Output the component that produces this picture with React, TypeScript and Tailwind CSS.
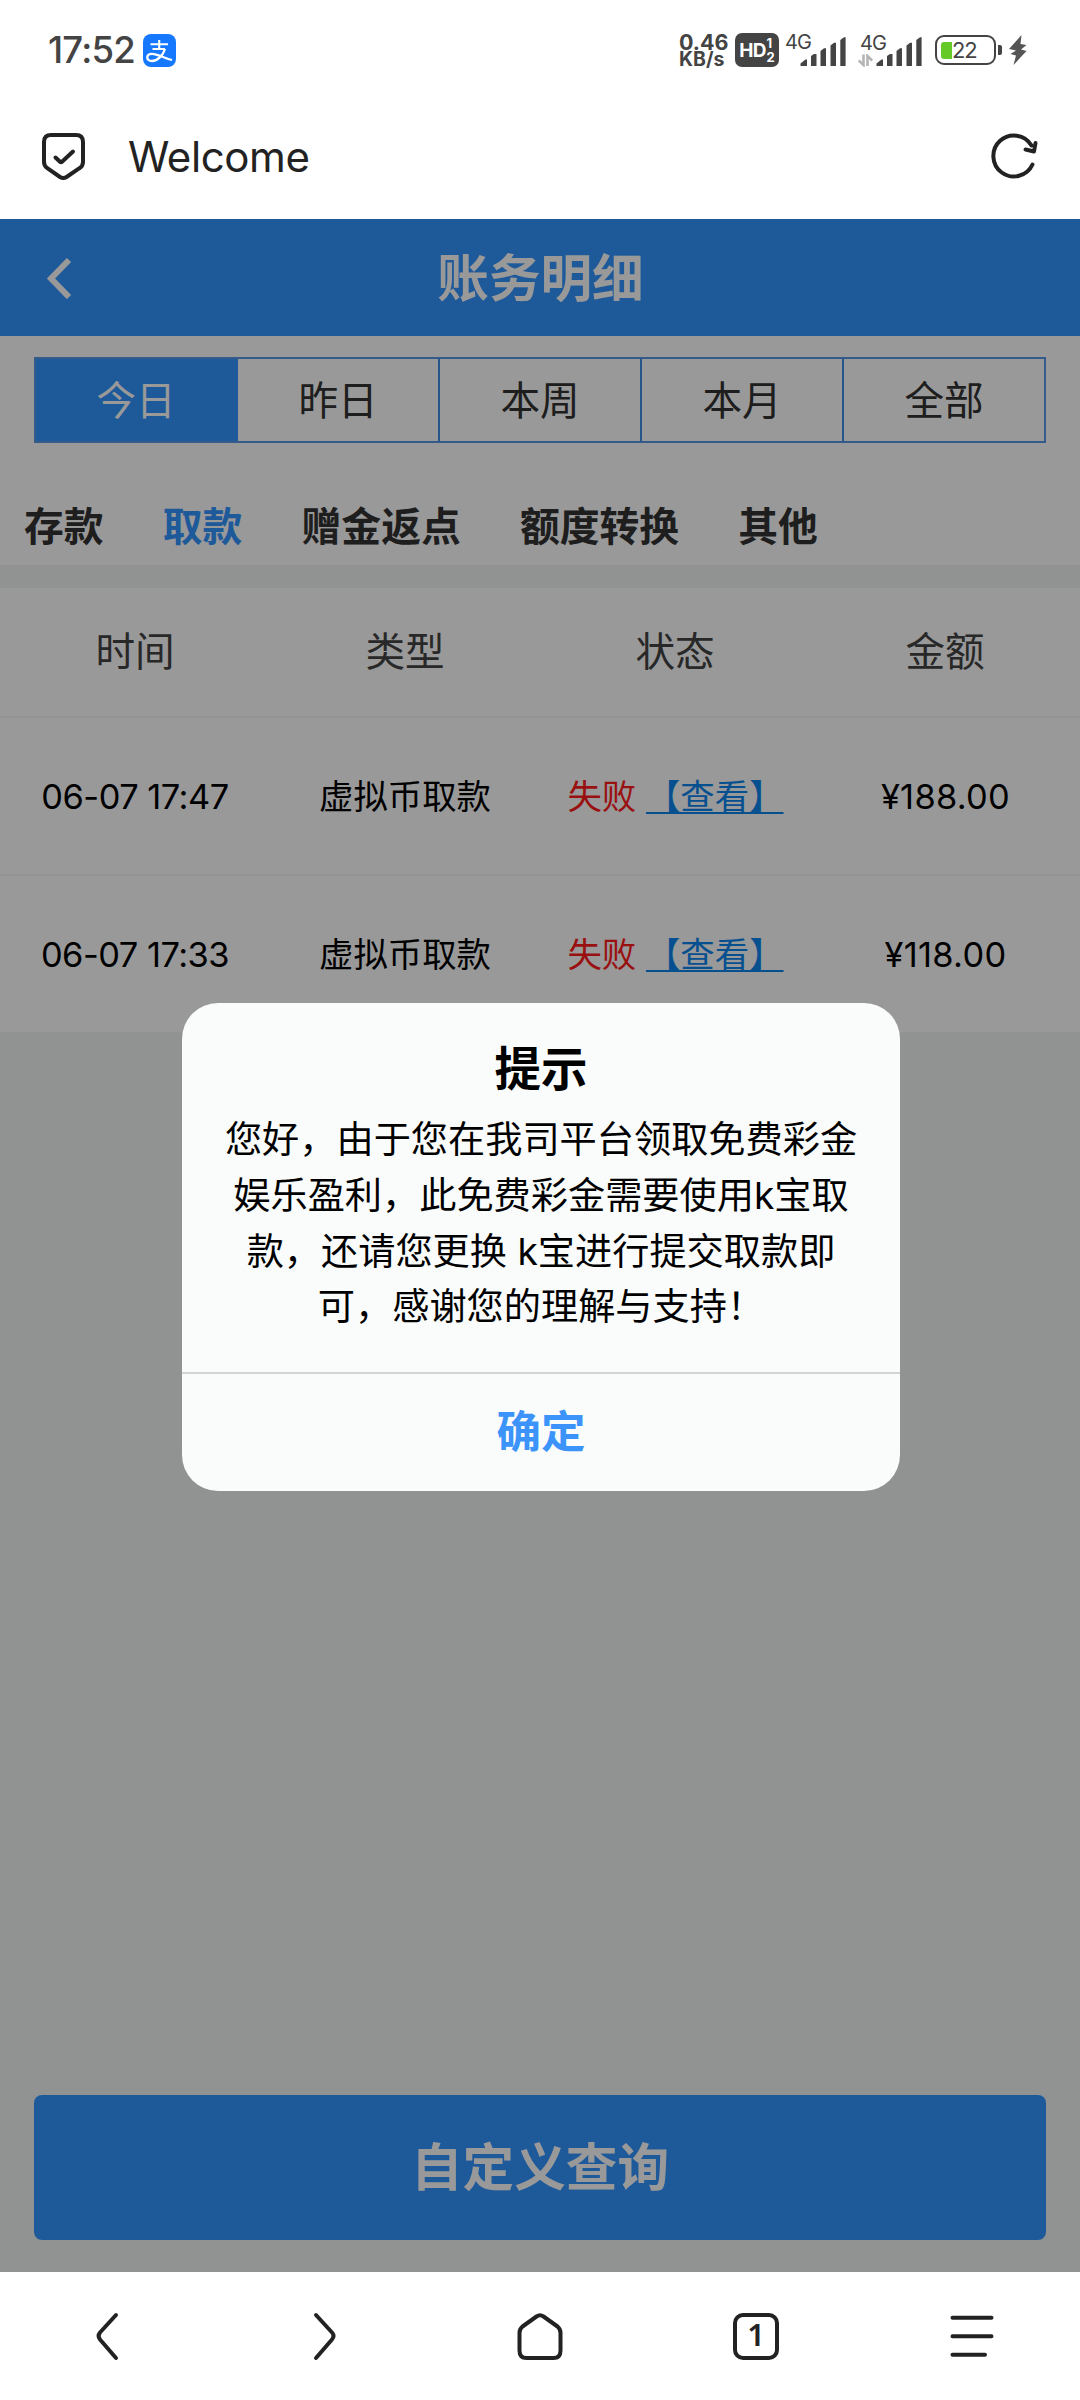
import type { ReactNode } from "react";

const ranges = ["今日", "昨日", "本周", "本月", "全部"];
const categories = ["存款", "取款", "赠金返点", "额度转换", "其他"];
const columns = ["时间", "类型", "状态", "金额"];
const records = [
  { time: "06-07 17:47", type: "虚拟币取款", status: "失败", amount: "¥188.00" },
  { time: "06-07 17:33", type: "虚拟币取款", status: "失败", amount: "¥118.00" },
];
const message = [
  "您好，由于您在我司平台领取免费彩金",
  "娱乐盈利，此免费彩金需要使用k宝取",
  "款，还请您更换 k宝进行提交取款即",
  "可，感谢您的理解与支持！",
];

function SignalBars() {
  return (
    <svg width="46" height="30" viewBox="0 0 46 30" fill="#444" className="block">
      <path d="M0.5 29V26.5L5.5 22.5H7V29Z" />
      <path d="M11 29V19L14 17H16.5V29Z" />
      <path d="M20.5 29V14L24 11.3H26V29Z" />
      <path d="M30.5 29V8.5L34 5.7H36V29Z" />
      <path d="M40.3 29V3L44 0.3H45.6V29Z" />
    </svg>
  );
}

function StatusBar() {
  return (
    <div className="flex h-[100px] items-center pl-[48px] text-[#444]">
      <span className="w-[95px] pt-px text-[36.5px] leading-none font-medium tracking-[-0.8px] whitespace-nowrap">17:52</span>
      <span className="flex h-[33px] w-[33px] items-center justify-center rounded-[8px] bg-[#1677ff]">
        <svg width="33" height="33" viewBox="0 0 33 33" fill="none" stroke="#fff">
          <path d="M7.5 10.2H25M16.2 6v9M9.5 15H22" strokeWidth="2.1" />
          <path
            d="M22 15C20 21.5 14.5 27 9 27C2.5 27 2.8 19.8 9 19.8C15 19.8 20 24 29 26"
            strokeWidth="2.3"
          />
        </svg>
      </span>
      <div className="ml-[503px] flex h-[36px] w-[56px] flex-col pt-px text-[21.5px] leading-[18px] font-bold whitespace-nowrap">
        <span>0.46</span>
        <span className="text-[19.5px] leading-[17px]">KB/s</span>
      </div>
      <div className="flex h-[34px] w-[44px] items-center justify-center gap-[1px] rounded-[7px] bg-[#444] text-white">
        <span className="text-[19px] leading-none font-bold tracking-[-0.8px]">HD</span>
        <span className="flex flex-col text-[13px] leading-[14px] font-bold">
          <span>1</span>
          <span>2</span>
        </span>
      </div>
      <div className="ml-[6px] flex h-[34px] items-end">
        <span className="w-[15px] self-start text-[20px] leading-[18px] tracking-[-1px] whitespace-nowrap">4G</span>
        <SignalBars />
      </div>
      <div className="ml-[12px] flex h-[34px] items-end">
        <div className="flex w-[18px] flex-col gap-[2px] whitespace-nowrap">
          <span className="pl-[2px] text-[20px] leading-[18px] tracking-[-1px]">4G</span>
          <svg width="15" height="13" viewBox="0 0 15 13" fill="none" stroke="#b5b5b5" strokeWidth="2.6">
            <path d="M5.5 0.5V11L0.8 6.5M9.5 12V2L14.2 6.5" />
          </svg>
        </div>
        <SignalBars />
      </div>
      <div className="ml-[13px] flex items-center">
        <div className="flex h-[30px] w-[61px] items-center rounded-[9px] border-2 border-[#444] pl-[4px]">
          <span className="h-[17px] w-[11px] rounded-l-[3px] bg-[#65c928]" />
          <span className="text-[22px] leading-none tracking-[-1.2px]">22</span>
        </div>
        <span className="ml-[2px] h-[10px] w-[4px] rounded-r-[2px] bg-[#444]" />
      </div>
      <svg className="ml-[7px]" width="18" height="30" viewBox="0 0 18 30" fill="#555">
        <path d="M12.5 0L0 14L7 15.5L1.5 19L7 20.500L4.500 30L17.500 16L12 14.500L17.500 10L11.500 9Z" />
      </svg>
    </div>
  );
}

function AddressBar() {
  return (
    <div className="flex h-[119px] items-start pt-[31px] pr-[41px] pl-[40px] text-[#222]">
      <svg width="46" height="50" viewBox="0 0 46 50" fill="none" stroke="currentColor" strokeWidth="4" strokeLinecap="round" strokeLinejoin="round">
        <path d="M11 4H36Q43 4 43 11V31Q43 35 39.5 37.2L26.5 46Q23.3 48 20 46L7.3 37.2Q4 35 4 31V11Q4 4 11 4Z" />
        <path d="M15.5 26.5L20 30.8Q21 31.5 22 30.8L33 20.5" />
      </svg>
      <span className="pt-[4px] pl-[42px] text-[42px] leading-[44px] tracking-[-0.4px]">Welcome</span>
      <svg className="ml-auto" width="50" height="50" viewBox="0 0 50 50" fill="none" stroke="currentColor" strokeWidth="4" strokeLinecap="round" strokeLinejoin="round">
        <path d="M43.5 33.5A20.5 20.5 0 1 1 42.5 14.5" />
        <path d="M46.5 12L45 20.5L36.5 18.5" />
      </svg>
    </div>
  );
}

function PageHeader() {
  return (
    <div className="grid h-[117px] grid-cols-3 items-center bg-[#3295ff] text-white">
      <svg className="ml-[44px]" width="28" height="42" viewBox="0 0 28 42" fill="none" stroke="currentColor" strokeWidth="6">
        <path d="M25 3L7 21.5L25 40" />
      </svg>
      <h1 className="pt-[2px] pl-px text-center text-[51.6px] leading-none font-bold">账务明细</h1>
    </div>
  );
}

function RangeTabs() {
  return (
    <div className="mx-[34px] mt-[21px] flex h-[86px] border-2 border-[#559ae8]">
      {ranges.map((label, i) => (
        <div
          key={label}
          className={
            i === 0
              ? "flex w-[202px] items-center justify-center bg-[#3295ff] pt-[4px] pr-[2px] text-[39.6px] text-white"
              : i === 1
                ? "flex flex-1 items-center justify-center pt-[4px] text-[39.6px] text-[#333]"
                : "flex flex-1 items-center justify-center border-l-2 border-[#3f8fe8] pt-[4px] text-[39.6px] text-[#333]"
          }
        >
          {label}
        </div>
      ))}
    </div>
  );
}

function RecordTable() {
  return (
    <div>
      <div className="grid h-[130px] grid-cols-4 items-center border-b-2 border-[#f3f6f5] bg-white pt-[2px] text-center text-[39.6px] text-[#444]">
        {columns.map((c) => (
          <span key={c}>{c}</span>
        ))}
      </div>
      {records.map((r) => (
        <div
          key={r.time}
          className="grid h-[158px] grid-cols-4 items-center border-b-2 border-[#f3f6f5] bg-white pt-px text-center text-[34.4px] whitespace-nowrap text-black"
        >
          <span className="tracking-[-0.5px]">{r.time}</span>
          <span>{r.type}</span>
          <span className="pl-px text-[#ff1c1c]">
            {r.status}{" "}
            <a className="text-[#0b85f0] underline decoration-2 underline-offset-[3px]">【查看】</a>
          </span>
          <span className="pl-px tracking-[0.3px]">{r.amount}</span>
        </div>
      ))}
    </div>
  );
}

function Dialog() {
  return (
    <div className="flex h-[488px] w-[718px] flex-col overflow-hidden rounded-[36px] bg-[#fafcfb] text-center text-black">
      <h2 className="mt-[39px] text-[46.5px] leading-[54px] font-bold">提示</h2>
      <div className="mt-[16px] text-[37.2px] leading-[55.8px] whitespace-nowrap">
        {message.map((line) => (
          <p key={line}>{line}</p>
        ))}
      </div>
      <button className="mt-auto flex h-[119px] items-center justify-center border-t-2 border-[#d2d4d3] text-[44.5px] font-bold text-[#3c94fa]">
        确定
      </button>
    </div>
  );
}

function NavIcon({ children }: { children: ReactNode }) {
  return (
    <div className="flex items-center justify-center">
      <svg width="60" height="60" viewBox="0 0 60 60" fill="none" stroke="#222" strokeWidth="4" strokeLinecap="round" strokeLinejoin="round">
        {children}
      </svg>
    </div>
  );
}

function BottomNav() {
  return (
    <div className="grid h-[128px] grid-cols-5 bg-white">
      <NavIcon>
        <path d="M38 9L22 26.5Q19.2 30 22 33.5L38 52" />
      </NavIcon>
      <NavIcon>
        <path d="M22 9L38 26.5Q41 30 38 33.5L22 52" />
      </NavIcon>
      <NavIcon>
        <path d="M26.5 10.5Q30 8 33.5 10.5L47.5 20.5Q50.5 23 50.5 27V44.5Q50.5 52 43.5 52H16.5Q9.5 52 9.5 44.5V27Q9.5 23 12.5 20.5Z" />
      </NavIcon>
      <div className="flex items-center justify-center">
        <span className="flex h-[47px] w-[46px] items-center justify-center rounded-[10px] border-4 border-[#222] pb-[3px] font-['Noto_Sans'] text-[31px] leading-none font-semibold text-[#222]">
          1
        </span>
      </div>
      <NavIcon>
        <path d="M10.5 11.7H49.5M10.5 30.3H49.5M10.5 48.8H43" />
      </NavIcon>
    </div>
  );
}

export default function App() {
  return (
    <div className="flex h-[2400px] w-[1080px] flex-col overflow-hidden bg-white font-['Inter','Noto_Sans_CJK_SC',sans-serif]">
      <StatusBar />
      <AddressBar />
      <main className="relative flex h-[2053px] flex-col bg-[#f0f5f2]">
        <PageHeader />
        <section className="h-[229px] bg-white">
          <RangeTabs />
          <div className="flex gap-[59.2px] pt-[54px] pl-[24px] text-[39.8px] leading-[60px] font-bold whitespace-nowrap text-[#333]">
            {categories.map((c) => (
              <span key={c} className={c === "取款" ? "text-[#3295ff]" : ""}>
                {c}
              </span>
            ))}
          </div>
        </section>
        <div className="h-[23px]" />
        <RecordTable />
        <button className="mx-[34px] mt-auto mb-[32px] h-[145px] rounded-[8px] bg-[#3295ff] text-[51.6px] font-bold text-white">
          自定义查询
        </button>
        <div className="absolute inset-0 bg-black/40">
          <div className="flex justify-center pt-[784px] pl-[2px]">
            <Dialog />
          </div>
        </div>
      </main>
      <BottomNav />
    </div>
  );
}
